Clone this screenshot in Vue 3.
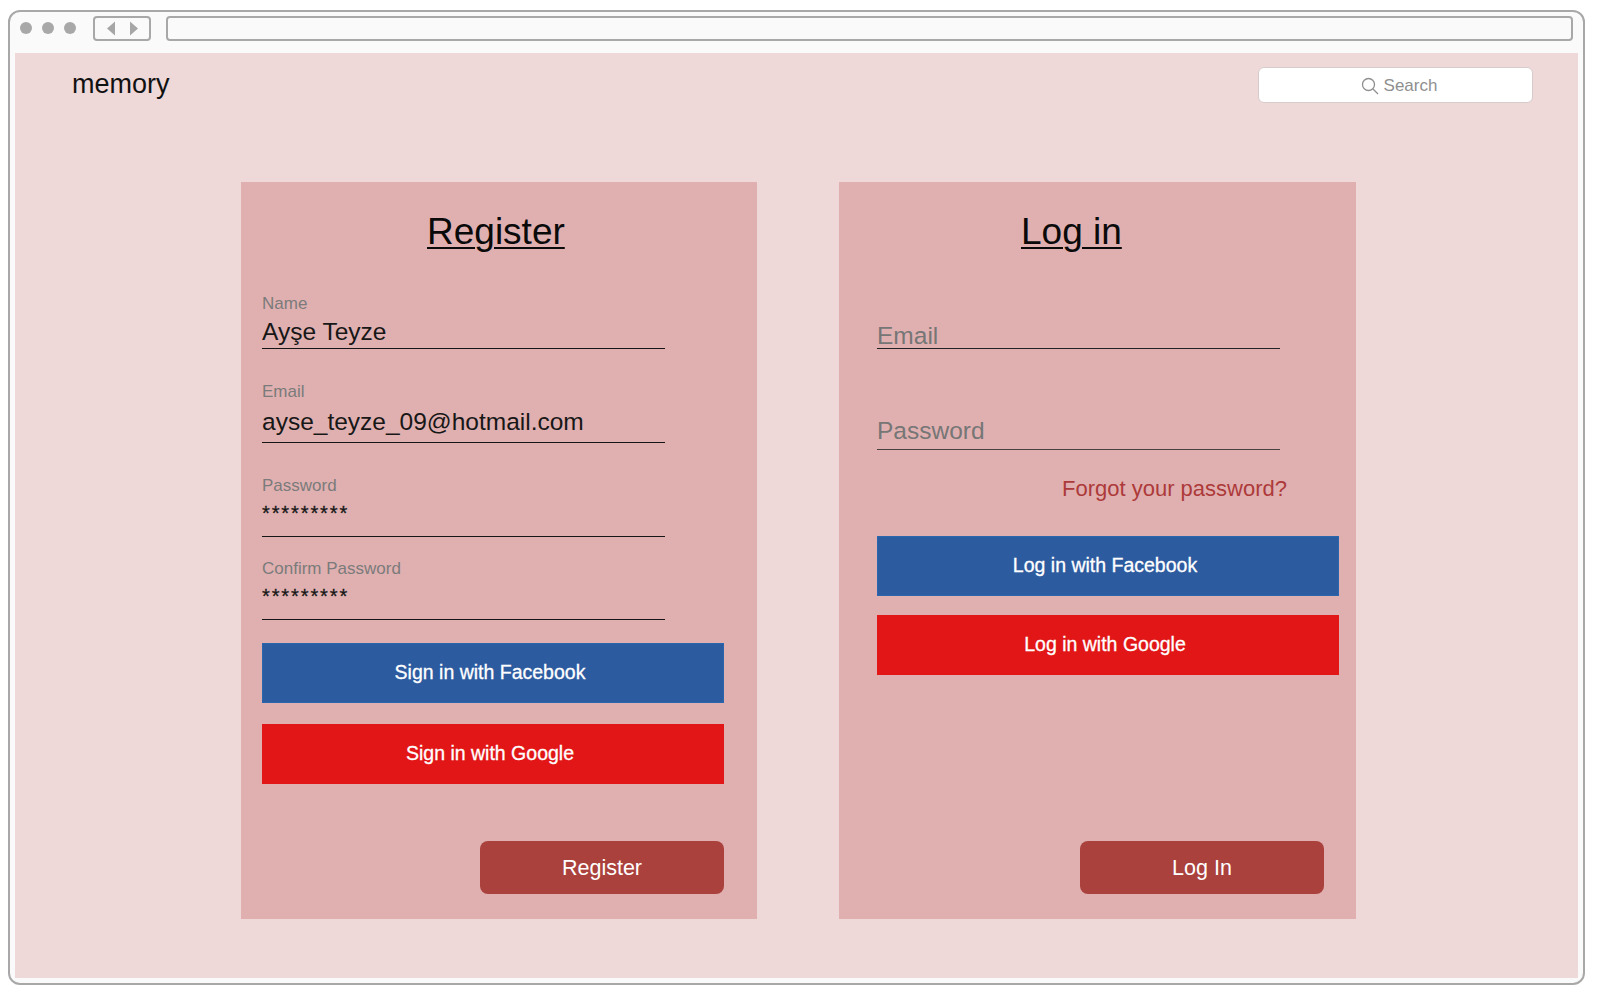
<script setup>
const regFields = [
  { label: 'Name', value: 'Ayşe Teyze', cls: 'f-name' },
  { label: 'Email', value: 'ayse_teyze_09@hotmail.com', cls: 'f-email' },
  { label: 'Password', value: '*********', cls: 'f-pass', secret: true },
  { label: 'Confirm Password', value: '*********', cls: 'f-conf', secret: true },
]
</script>

<template>
  <div class="window">
    <div class="chrome">
      <div class="dots"><i></i><i></i><i></i></div>
      <div class="nav">
        <svg width="10" height="15" viewBox="0 0 10 15"><path d="M9 0.5V14.5L1 7.5Z" fill="#a6a6a6"/></svg>
        <svg width="10" height="15" viewBox="0 0 10 15"><path d="M1 0.5V14.5L9 7.5Z" fill="#a6a6a6"/></svg>
      </div>
      <div class="url"></div>
    </div>
    <div class="page">
      <header class="top">
        <div class="logo">memory</div>
        <div class="search">
          <svg width="18" height="18" viewBox="0 0 18 18" fill="none" stroke="#8f8f8f" stroke-width="1.3"><circle cx="7.5" cy="7.5" r="6"/><path d="M12 12l5 5"/></svg>
          <span>Search</span>
        </div>
      </header>
      <main class="cards">
        <section class="card">
          <h2 class="title reg-title">Register</h2>
          <div class="fields">
            <div v-for="f in regFields" :key="f.label" class="field" :class="f.cls">
              <label>{{ f.label }}</label>
              <div class="val" :class="{ secret: f.secret }">{{ f.value }}</div>
            </div>
          </div>
          <button class="social fb s1">Sign in with Facebook</button>
          <button class="social gg s2">Sign in with Google</button>
          <button class="submit sub-reg">Register</button>
        </section>
        <section class="card login">
          <h2 class="title log-title">Log in</h2>
          <div class="ph ph1">Email</div>
          <div class="ph ph2">Password</div>
          <div class="forgot">Forgot your password?</div>
          <button class="social fb l1">Log in with Facebook</button>
          <button class="social gg l2">Log in with Google</button>
          <button class="submit sub-log">Log In</button>
        </section>
      </main>
    </div>
  </div>
</template>

<style>
html, body { margin: 0; background: #fff; }
</style>

<style scoped>
* { box-sizing: border-box; }
.window {
  margin: 10px 0 0 8px;
  width: 1577px;
  height: 975px;
  border: 2px solid #a8a8a8;
  border-radius: 12px;
  background: #fafafa;
  padding: 0 5px 5px;
  display: flex;
  flex-direction: column;
  font-family: "Liberation Sans", Arial, sans-serif;
  overflow: hidden;
}
.chrome { height: 41px; flex: none; display: flex; align-items: center; padding: 0 0 8px 5px; }
.dots { display: flex; gap: 10px; width: 73px; margin-top: -2px; }
.dots i { width: 12px; height: 12px; border-radius: 50%; background: #a8a8a8; }
.nav { width: 58px; height: 25px; border: 2px solid #a8a8a8; border-radius: 4px; display: flex; align-items: center; justify-content: center; gap: 13px; }
.url { margin-left: 15px; flex: 1; margin-right: 5px; height: 25px; border: 2px solid #a8a8a8; border-radius: 4px; }
.page { flex: 1; background: #eed8d8; display: flex; flex-direction: column; }
.top { height: 129px; flex: none; display: flex; justify-content: space-between; align-items: flex-start; padding: 14px 45px 0 57px; }
.logo { font-size: 27px; line-height: 34px; color: #111; }
.search { width: 275px; height: 36px; background: #fff; border: 1px solid #d6cccc; border-radius: 6px; display: flex; align-items: center; justify-content: center; gap: 5px; color: #8f8f8f; font-size: 17px; padding: 2px 0 0 7px; }
.cards { display: flex; gap: 82px; padding-left: 226px; }
.card { width: 516px; height: 737px; background: #e0b0b0; padding-left: 21px; display: flex; flex-direction: column; align-items: flex-start; }
.login { width: 517px; padding-left: 38px; }
.title { margin: 0; font-weight: 400; font-size: 37px; line-height: 42px; color: #0a0a0a; text-decoration: underline; text-decoration-thickness: 2px; text-underline-offset: 3px; margin-top: 29px; }
.reg-title { margin-left: 165px; }
.log-title { margin-left: 144px; }
.fields { margin-top: 42px; display: flex; flex-direction: column; }
.field { width: 403px; display: flex; flex-direction: column; border-bottom: 1px solid #151515; }
label { font-size: 17px; line-height: 18px; color: #7b7b7b; }
.val { font-size: 24.5px; line-height: 30px; color: #171717; }
.secret { font-size: 20px; line-height: 20px; letter-spacing: 1.9px; -webkit-text-stroke: 0.3px #171717; }
.f-name { height: 54px; }
.f-name .val { margin-top: 4px; }
.f-email { height: 60px; margin-top: 34px; }
.f-email .val { margin-top: 6px; }
.f-pass { height: 60px; margin-top: 34px; }
.f-pass .val, .f-conf .val { margin-top: 8px; }
.f-conf { height: 60px; margin-top: 23px; }
.social { border: 1px solid; width: 462px; height: 60px; color: #fff; font: 500 19.5px "Liberation Sans", Arial, sans-serif; -webkit-text-stroke: 0.3px #fff; padding: 0 6px 2px 0; flex: none; }
.fb { background: #2d5b9f; border-color: #2a66ad; }
.gg { background: #e21616; border-color: #e21616; }
.s1 { margin-top: 23px; }
.s2 { margin-top: 21px; }
.submit { width: 244px; height: 53px; background: #aa413d; border: 0; border-radius: 8px; color: #fff; font: 21.5px "Liberation Sans", Arial, sans-serif; padding-top: 2px; }
.sub-reg { margin: 57px 0 0 218px; }
.ph { width: 403px; border-bottom: 1px solid #222; font-size: 24.5px; line-height: 30px; color: #767676; }
.ph1 { margin-top: 68px; height: 28px; }
.ph2 { margin-top: 67px; height: 34px; border-bottom-color: #4a4040; }
.forgot { margin: 25px 0 0 185px; font-size: 22px; line-height: 28px; color: #ad3a3a; }
.l1 { margin-top: 33px; }
.l2 { margin-top: 19px; }
.sub-log { margin: 166px 0 0 203px; }
</style>
